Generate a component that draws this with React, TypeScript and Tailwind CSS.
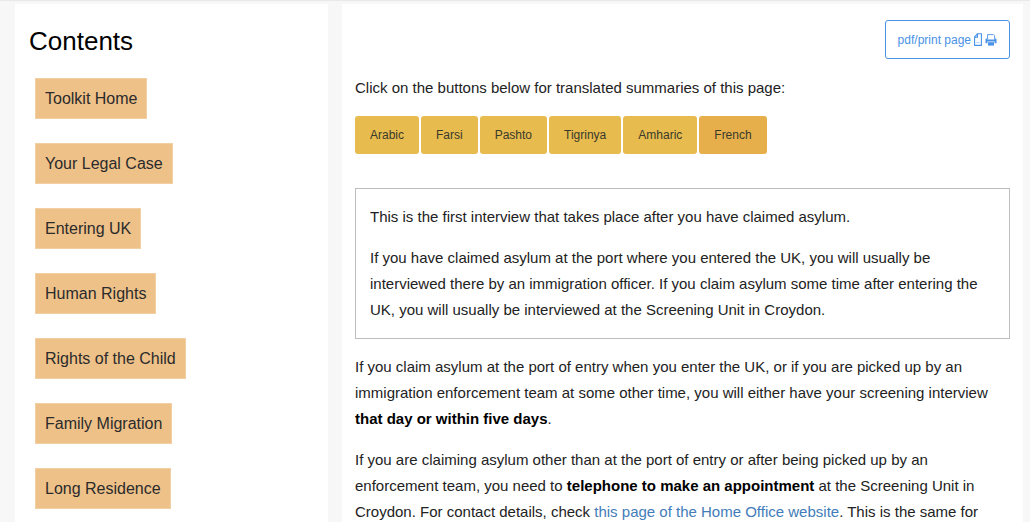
import React from "react";

const contents = [
  "Toolkit Home",
  "Your Legal Case",
  "Entering UK",
  "Human Rights",
  "Rights of the Child",
  "Family Migration",
  "Long Residence",
];

const languages = ["Arabic", "Farsi", "Pashto", "Tigrinya", "Amharic", "French"];

function PdfIcon() {
  return (
    <svg viewBox="0 0 8 14" className="h-3.5 w-2" fill="none" stroke="currentColor" aria-hidden="true">
      <path d="M3.4 0.8H7.4V12.4H0.6V4Z" strokeWidth="1.1" />
      <path d="M3.5 0.8V4.2H0.6" strokeWidth="1.2" />
      <path d="M2.2 9.6H5.8" strokeWidth="0.6" opacity="0.6" />
    </svg>
  );
}

function PrinterIcon() {
  return (
    <svg viewBox="0 0 12 14" className="h-3.5 w-3" aria-hidden="true">
      <path d="M2.6 6V1.6H8.4L9.6 2.8V6" fill="none" stroke="currentColor" strokeWidth="0.9" />
      <path d="M1.6 5.4H2.4V6.6H9.6V5.4H10.4Q11.5 5.4 11.5 6.5V10.2H9.6V8.6H2.4V10.2H0.5V6.5Q0.5 5.4 1.6 5.4Z" fill="currentColor" />
      <path d="M3 9.2H9V12.6H3Z" fill="currentColor" />
    </svg>
  );
}

export default function App() {
  return (
    <div className="h-screen overflow-hidden border-t border-[#e9e9e9] bg-[#f7f7f7] font-['Liberation_Sans',Arial,sans-serif] text-[#222]">
      <div className="grid min-h-full grid-cols-[313fr_681fr] gap-3.5 pt-[3px] pr-[7px] pl-[15px]">
        <nav aria-label="Contents" className="bg-white px-3.5 pt-5">
          <h2 className="text-[26px] leading-[34px] text-black">Contents</h2>
          <ul className="mt-5 flex flex-col items-start gap-6 pl-1.5">
            {contents.map((item) => (
              <li key={item} className="flex">
                <a href="#" className="border border-[#f2cfa2] bg-[#eec189] px-[9px] py-2 text-base leading-[23px] text-[#2b2b2b]">
                  {item}
                </a>
              </li>
            ))}
          </ul>
        </nav>

        <main className="bg-white px-[13px] pt-4 text-[15px] leading-[26px]">
          <div className="flex justify-end">
            <button type="button" className="flex h-[39px] items-center gap-[3px] rounded-[3px] border border-[#4a92e6] px-3 text-xs text-[#4a92e6]">
              pdf/print page
              <PdfIcon />
              <PrinterIcon />
            </button>
          </div>

          <p className="mt-4">Click on the buttons below for translated summaries of this page:</p>
          <div className="mt-[15px] flex flex-wrap gap-0.5">
            {languages.map((language) => (
              <button
                key={language}
                type="button"
                className={
                  language === "French"
                    ? "h-[38px] rounded-[3px] bg-[#e6af4b] px-[15px] text-xs text-[#3a3a2c]"
                    : "h-[38px] rounded-[3px] bg-[#e7bb4e] px-[15px] text-xs text-[#3a3a2c]"
                }
              >
                {language}
              </button>
            ))}
          </div>

          <section className="mt-[34px] flex flex-col gap-[15px] border border-[#bdbdbd] px-3.5 py-[15px]">
            <p>This is the first interview that takes place after you have claimed asylum.</p>
            <p>
              If you have claimed asylum at the port where you entered the UK, you will usually be interviewed there by
              an immigration officer. If you claim asylum some time after entering the UK, you will usually be
              interviewed at the Screening Unit in Croydon.
            </p>
          </section>

          <div className="mt-[15px] flex flex-col gap-[15px]">
            <p>
              If you claim asylum at the port of entry when you enter the UK, or if you are picked up by an immigration
              enforcement team at some other time, you will either have your screening interview{" "}
              <strong className="text-black">that day or within five days</strong>.
            </p>
            <p>
              If you are claiming asylum other than at the port of entry or after being picked up by an enforcement
              team, you need to <strong className="text-black">telephone to make an appointment</strong> at the
              Screening Unit in Croydon. For contact details, check{" "}
              <a href="#" className="text-[#427cb9]">this page of the Home Office website</a>. This is the same for
            </p>
          </div>
        </main>
      </div>
    </div>
  );
}
